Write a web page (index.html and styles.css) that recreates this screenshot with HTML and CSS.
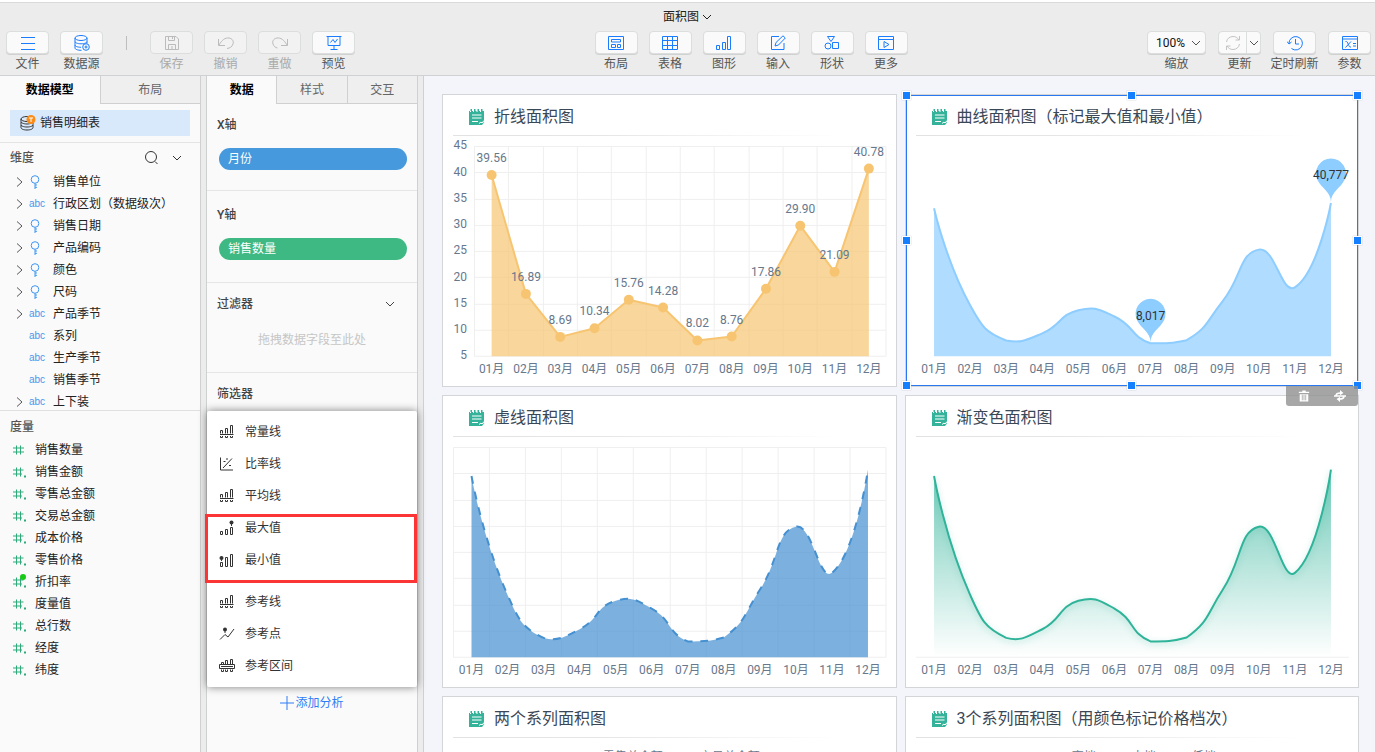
FILE: index.html
```html
<!DOCTYPE html>
<html lang="zh-CN">
<head>
<meta charset="utf-8">
<title>面积图</title>
<link rel="stylesheet" href="styles.css">
</head>
<body>
<svg class="sprite" aria-hidden="true">
  <symbol id="i-down" viewBox="0 0 10 10"><path d="M1 3l4 4 4-4"/></symbol>
  <symbol id="i-right" viewBox="0 0 10 10"><path d="M3 0.5l5 4.5-5 4.5"/></symbol>
  <symbol id="i-key" viewBox="0 0 12 14"><circle cx="6" cy="4.5" r="3.8"/><path d="M6 8.3V14M6 10h2M6 12.3h2"/></symbol>
  <symbol id="i-hash" viewBox="0 0 14 14"><path d="M3.5 2.500v9M7.500 2.500v9M0 5h11M0 9h11"/></symbol>
  <symbol id="i-hashdot" viewBox="0 0 14 14"><path d="M3.500 2.500v9M7.500 2.500v9M0 5h10.500M0 9h9"/><rect class="solid" x="11" y="10.500" width="2" height="2"/></symbol>
  <symbol id="i-note" viewBox="0 0 16 16"><path class="solid" d="M0 2h15v10l-1 1.500 1.500-.5-2.500 3H0z"/><path class="solid" d="M1.500 0h1.500v3h-1.500zM5 0h1.500v3H5zM8.500 0H10v3H8.500zM12 0h1.500v3H12z"/><path class="cut" d="M1 2.500h1M4 2.500h1M7.500 2.500h1M11 2.500h1M3 6h9.500M3 9h9.500M3 12.500h6M10 14.500l2-1.500 1 1 2-2.500"/></symbol>
  <symbol id="i-bars-line" viewBox="0 0 16 16"><path d="M1.500 9.500v-3h2v3M6.500 9.500v-5h2v5M11.500 9.500v-8h2v8M1 10.500h13.500M1.500 12v1.500h2V12M6.500 12v1.500h2V12M11.500 12v1.500h2V12"/></symbol>
</svg>

<header class="top">
  <div class="title-row"><button class="doc-title" type="button">面积图<svg class="chev"><use href="#i-down"/></svg></button></div>
  <div class="toolbar">
    <div class="tools">
      <button class="tool" type="button"><span class="face"><svg viewBox="0 0 16 16"><path d="M1 2.500h14M1 8.500h14M1 14.500h14"/></svg></span>文件</button>
      <button class="tool" type="button"><span class="face"><svg viewBox="0 0 16 16"><ellipse cx="7" cy="3" rx="6" ry="2.500"/><path d="M1 3v3.500c0 1.300 2.500 2.300 6 2.300s6-1 6-2.300V3M1 6.500V10c0 1.200 2.300 2.200 6 2.300M13 6.500v2M1 10v3c0 1.200 2.300 2.300 6.500 2.300"/><circle cx="12" cy="12" r="3.300"/><path d="M10.500 12h3M12 10.500v3"/></svg></span>数据源</button>
      <span class="sep"></span>
      <button class="tool off" type="button" disabled><span class="face"><svg viewBox="0 0 16 16"><path d="M1.500 1.500h10.500l2.500 2.500v10.500h-13zM4.500 1.500v4h6v-4M8.500 2v2M4.500 14.500v-5h7v5M8 11v3"/></svg></span>保存</button>
      <button class="tool off" type="button" disabled><span class="face"><svg viewBox="0 0 16 16"><path d="M0.500 4v6.500H7M1 10c3-5 6-7.500 10-7 3.500.5 5 3.500 4 6-1 3-3 4-6 4.500"/></svg></span>撤销</button>
      <button class="tool off" type="button" disabled><span class="face"><svg viewBox="0 0 16 16"><path d="M15.500 4v6.500H9M15 10c-3-5-6-7.500-10-7-3.500.5-5 3.500-4 6 .8 2.500 2.500 3.500 4.500 4"/></svg></span>重做</button>
      <button class="tool" type="button"><span class="face"><svg viewBox="0 0 16 16"><path d="M0.500 1.500h15M2 1.500v9h12v-9M4.500 7.500L7 4.500l2 3 2.500-3.500M8 10.500v4M4.500 14.500h7"/></svg></span>预览</button>
    </div>
    <div class="tools">
      <button class="tool" type="button"><span class="face"><svg viewBox="0 0 16 16"><path d="M.5 1.500h15v13H.5zM3.500 4.500h9v2.500h-9zM3.500 9.500h4v3h-4zM9.500 9.500h3v3h-3z"/></svg></span>布局</button>
      <button class="tool" type="button"><span class="face"><svg viewBox="0 0 16 16"><path d="M.5 1.500h15v13H.5zM.5 5.500h15M.5 10.500h15M5.500 1.500v13M10.500 1.500v13"/></svg></span>表格</button>
      <button class="tool" type="button"><span class="face"><svg viewBox="0 0 16 16"><path d="M.5 10.500h3v4h-3zM6.500 7.500h3v7h-3zM11.500 1.500h3v13h-3z"/></svg></span>图形</button>
      <button class="tool" type="button"><span class="face"><svg viewBox="0 0 16 16"><path d="M9 1.500H1.500v13H14V8M5 11l1-3.500L13 .8l2.300 2.200L8.500 10z"/></svg></span>输入</button>
      <button class="tool" type="button"><span class="face"><svg viewBox="0 0 16 16"><path d="M3.500 1.500h7L7 6.500zM8.500 7.500h6v6h-6z"/><circle cx="4" cy="11" r="3"/></svg></span>形状</button>
      <button class="tool" type="button"><span class="face"><svg viewBox="0 0 16 16"><path d="M.5 1.500h15v13H.5zM.5 4.500h15M6 6.500v6l5-3z"/></svg></span>更多</button>
    </div>
    <div class="tools tools-end">
      <div class="tool"><span class="face face-zoom"><select id="zoom" aria-labelledby="zoom-label"><option>100%</option></select><svg class="chev"><use href="#i-down"/></svg></span><label id="zoom-label" for="zoom">缩放</label></div>
      <button class="tool" type="button"><span class="face split"><span class="split-main"><svg viewBox="0 0 16 16"><path d="M1.500 7C2 3.500 4.800 1.500 8 1.500c2.500 0 4.500 1 6 3.500M14.500 1v4h-4M14.500 9c-.5 3.500-3.300 5.500-6.500 5.500-2.500 0-4.500-1-6-3.500M1.500 15v-4h4"/></svg></span><span class="split-arrow"><svg class="chev"><use href="#i-down"/></svg></span></span>更新</button>
      <button class="tool" type="button"><span class="face"><svg viewBox="0 0 16 16"><path d="M2 8.500A6.700 6.700 0 1 1 4.500 13.500M0 6.500L2 9l2.500-2M8.500 4v5h3.500"/></svg></span>定时刷新</button>
      <button class="tool" type="button"><span class="face"><svg viewBox="0 0 16 16"><path d="M.5 1.500h15v13H.5zM.5 4h15M3.500 6.500c3-1 2.500 6.500 5.500 5.500M9 6.500L3.500 12.500M11 8.500h3M11 11h3"/></svg></span>参数</button>
    </div>
  </div>
</header>

<div class="work">
  <aside class="panel model">
    <div class="tabs"><button class="tab on" type="button">数据模型</button><button class="tab" type="button">布局</button></div>
    <div class="source-wrap">
      <button class="source" type="button"><svg viewBox="0 0 16 16"><g class="ink"><ellipse cx="7" cy="4" rx="6" ry="2.500"/><path d="M1 4v2.500c0 1.300 2.500 2.500 6 2.500s6-1.200 6-2.500M1 7v2.500C1 11 3.500 12 7 12s6-1 6-2.500V7M1 10v2.500C1 14 3.500 15 7 15s6-1 6-2.500V10"/></g><circle class="badge" cx="11" cy="4.500" r="4.500"/><path class="badge-t" d="M9 3h4M11 3v4"/></svg>销售明细表</button>
    </div>
    <section class="dims">
      <div class="sec-head"><h2>维度</h2><span class="sec-tools"><svg class="search" viewBox="0 0 16 16"><circle cx="7" cy="7" r="5.500"/><path d="M11 11.500l2.500 2.500"/></svg><svg class="chev"><use href="#i-down"/></svg></span></div>
      <ul class="dim-list">
        <li><svg class="exp"><use href="#i-right"/></svg><svg class="key"><use href="#i-key"/></svg>销售单位</li>
        <li><svg class="exp"><use href="#i-right"/></svg><span class="abc">abc</span>行政区划（数据级次）</li>
        <li><svg class="exp"><use href="#i-right"/></svg><svg class="key"><use href="#i-key"/></svg>销售日期</li>
        <li><svg class="exp"><use href="#i-right"/></svg><svg class="key"><use href="#i-key"/></svg>产品编码</li>
        <li><svg class="exp"><use href="#i-right"/></svg><svg class="key"><use href="#i-key"/></svg>颜色</li>
        <li><svg class="exp"><use href="#i-right"/></svg><svg class="key"><use href="#i-key"/></svg>尺码</li>
        <li><svg class="exp"><use href="#i-right"/></svg><span class="abc">abc</span>产品季节</li>
        <li><span class="exp"></span><span class="abc">abc</span>系列</li>
        <li><span class="exp"></span><span class="abc">abc</span>生产季节</li>
        <li><span class="exp"></span><span class="abc">abc</span>销售季节</li>
        <li><svg class="exp"><use href="#i-right"/></svg><span class="abc">abc</span>上下装</li>
      </ul>
    </section>
    <section class="measures">
      <div class="sec-head"><h2>度量</h2></div>
      <ul class="mea-list">
        <li><svg class="hash"><use href="#i-hash"/></svg>销售数量</li>
        <li><svg class="hash"><use href="#i-hashdot"/></svg>销售金额</li>
        <li><svg class="hash"><use href="#i-hashdot"/></svg>零售总金额</li>
        <li><svg class="hash"><use href="#i-hashdot"/></svg>交易总金额</li>
        <li><svg class="hash"><use href="#i-hashdot"/></svg>成本价格</li>
        <li><svg class="hash"><use href="#i-hashdot"/></svg>零售价格</li>
        <li class="calc"><svg class="hash"><use href="#i-hashdot"/></svg>折扣率</li>
        <li><svg class="hash"><use href="#i-hashdot"/></svg>度量值</li>
        <li><svg class="hash"><use href="#i-hashdot"/></svg>总行数</li>
        <li><svg class="hash"><use href="#i-hashdot"/></svg>经度</li>
        <li><svg class="hash"><use href="#i-hashdot"/></svg>纬度</li>
      </ul>
    </section>
  </aside>

  <aside class="panel props">
    <div class="tabs"><button class="tab on" type="button">数据</button><button class="tab" type="button">样式</button><button class="tab" type="button">交互</button></div>
    <section class="slot"><h2>X轴</h2><div class="pill pill-dim">月份</div></section>
    <section class="slot"><h2>Y轴</h2><div class="pill pill-mea">销售数量</div></section>
    <section class="slot"><h2>过滤器<svg class="chev"><use href="#i-down"/></svg></h2><p class="hint">拖拽数据字段至此处</p></section>
    <section class="slot slot-filter"><h2>筛选器</h2></section>
    <div class="analysis">
      <button class="add" type="button"><svg viewBox="0 0 14 14"><path d="M7 0v14M0 7h14"/></svg>添加分析</button>
      <div class="menu" role="menu">
        <button type="button" role="menuitem"><svg><use href="#i-bars-line"/></svg>常量线</button>
        <button type="button" role="menuitem"><svg viewBox="0 0 16 16"><path d="M1.500 1.500v12.500H14M4 12L13 2.500M4.500 5.500h2M7 3h2M10 9.500h2"/></svg>比率线</button>
        <button type="button" role="menuitem"><svg><use href="#i-bars-line"/></svg>平均线</button>
        <button type="button" role="menuitem"><svg viewBox="0 0 16 16"><path d="M1.500 11.500h2v3h-2zM6.500 9.500h2v5h-2zM11.500 7.500h2v7h-2zM12.500 3v3"/><circle class="solid" cx="12.500" cy="2.500" r="2"/></svg>最大值</button>
        <button type="button" role="menuitem"><svg viewBox="0 0 16 16"><path d="M1.500 10.500h2v4h-2zM6.500 5.500h2v9h-2zM11.500 2.500h2v12h-2zM2.500 6v3"/><circle class="solid" cx="2.500" cy="6" r="2"/></svg>最小值</button>
        <span class="menu-gap"></span>
        <button type="button" role="menuitem"><svg><use href="#i-bars-line"/></svg>参考线</button>
        <button type="button" role="menuitem"><svg viewBox="0 0 16 16"><path d="M1 13.500l5-5 3 2.500 6-8M6 4v3"/><circle class="solid" cx="6" cy="3.500" r="2"/></svg>参考点</button>
        <button type="button" role="menuitem"><svg viewBox="0 0 16 16"><path d="M2.500 6V4.500h2V6M6.500 6V2.500h2V6M11.500 6V1.500h2V6M.5 6.500h15v4H.5zM2 8.500h12M2.500 11.500v2h2v-2M6.500 11.500v2h2v-2M11.500 11.500v2h2v-2"/></svg>参考区间</button>
        <span class="mark"></span>
      </div>
    </div>
  </aside>

  <main class="canvas">
    <article class="card"><h3><svg class="note"><use href="#i-note"/></svg>折线面积图</h3><svg class="chart" id="chart-line" viewBox="0 0 453 250"></svg></article>
    <article class="card selected"><h3><svg class="note"><use href="#i-note"/></svg>曲线面积图（标记最大值和最小值）</h3><svg class="chart" id="chart-curve" viewBox="0 0 453 250"></svg>
      <div class="frame"><i class="h tl"></i><i class="h tc"></i><i class="h tr"></i><i class="h ml"></i><i class="h mr"></i><i class="h bl"></i><i class="h bc"></i><i class="h br"></i></div>
      <div class="card-tools">
        <button type="button" aria-label="删除"><svg viewBox="0 0 14 14"><path class="solid" d="M1 2h4V.5h4V2h4v1.500H1zM2 5h10v8.500H2z"/><path class="gap-line" d="M5 5.500v6.500M7 5.500v6.500M9 5.500v6.500"/></svg></button>
        <button type="button" aria-label="切换"><svg viewBox="0 0 14 14"><path class="solid" d="M7 0l4 3.500L7 6zM7 14l-4-3.500L7 8z"/><path class="stroke" d="M2.500 6.500c0-2 1.500-3 5-3M0 7h14M11.500 7.500c0 2-1.500 3-5 3"/></svg></button>
      </div>
    </article>
    <article class="card"><h3><svg class="note"><use href="#i-note"/></svg>虚线面积图</h3><svg class="chart" id="chart-dash" viewBox="0 0 453 250"></svg></article>
    <article class="card"><h3><svg class="note"><use href="#i-note"/></svg>渐变色面积图</h3><svg class="chart" id="chart-fade" viewBox="0 0 453 250"></svg></article>
    <article class="card"><h3><svg class="note"><use href="#i-note"/></svg>两个系列面积图</h3><div class="legend legend-wide"><span class="s1">零售总金额</span><span class="s2">交易总金额</span></div></article>
    <article class="card"><h3><svg class="note"><use href="#i-note"/></svg>3个系列面积图（用颜色标记价格档次）</h3><div class="legend"><span class="s1">高档</span><span class="s2">中档</span><span class="s3">低档</span></div></article>
  </main>
</div>
<script src="charts.js"></script>
</body>
</html>
```
FILE: styles.css
```css
* { box-sizing: border-box; }
body {
  margin: 0;
  height: 100vh;
  display: flex;
  flex-direction: column;
  overflow: hidden;
  border-top: 2px solid #fff;
  background: #ebeceb;
  color: #333;
  font: 12px/20px Roboto, "Noto Sans CJK SC", sans-serif;
}
button, select { font: inherit; color: inherit; border: 0; padding: 0; background: none; }
h2, h3, ul, p { margin: 0; padding: 0; font-weight: normal; list-style: none; }
svg { fill: none; stroke: currentColor; display: block; flex: none; }
.solid { fill: currentColor; stroke: none; }
.sprite { position: absolute; width: 0; height: 0; }
.chev { width: 10px; height: 10px; }

/* header */
.top { border-top: 1px solid #d9dbdb; border-bottom: 1px solid #cfd1d2; height: 74px; flex: none; }
.title-row { display: flex; justify-content: center; height: 28px; padding-top: 4px; }
.doc-title { display: flex; align-items: center; gap: 3px; height: 20px; color: #222; }
.toolbar { display: flex; justify-content: space-between; padding: 0 4px 0 6px; }
.tools { display: flex; gap: 11px; }
.tools-end { gap: 12px; }
.tool { display: flex; flex-direction: column; align-items: center; width: 43px; color: #555; white-space: nowrap; }
.tool:has(.face-zoom) { width: 59px; }
.face {
  display: flex; align-items: center; justify-content: center;
  align-self: stretch; height: 23px;
  border: 1px solid #dcdddd; border-radius: 4px; background: #fafafa;
  box-shadow: 0 1px 0 #d0d1d1; color: #1a7cff;
}
.face svg { width: 16px; height: 16px; }
.tool.off { color: #aaa; }
.tool.off .face { background: #f1f2f1; color: #bbb; box-shadow: none; }
.sep { width: 25px; height: 23px; display: flex; justify-content: center; align-items: center; }
.sep::before { content: ""; width: 1px; height: 14px; background: #bdbdbd; }
.face-zoom { position: relative; color: #111; }
.face-zoom select { appearance: none; width: 100%; padding-left: 8px; height: 21px; outline: 0; }
.face-zoom .chev, .split .chev { width: 10px; height: 10px; color: #555; }
.face-zoom .chev { position: absolute; right: 4px; pointer-events: none; }
.split-main, .split-arrow { display: flex; align-items: center; justify-content: center; height: 21px; }
.split-main { flex: 1; color: #c4c4c4; }
.split-arrow { width: 14px; border-left: 1px solid #dcdddd; }

/* panels */
.work { flex: 1; min-height: 0; display: flex; gap: 5px; }
.panel { background: #fafafa; flex: none; display: flex; flex-direction: column; }
.model { width: 201px; border-right: 1px solid #cfd0d0; }
.props { width: 212px; border: solid #cfd0d0; border-width: 0 1px; }
.tabs { display: flex; height: 28px; flex: none; }
.tab { flex: 1; background: #efefef; border: solid #d0d0d0; border-width: 0 0 1px 1px; color: #666; }
.tab.on { background: none; border-color: transparent; font-weight: bold; color: #000; border-left: 0; }
.source-wrap { padding: 6px 10px; border-bottom: 1px solid #e4e4e4; }
.source { display: flex; align-items: center; gap: 4px; width: 100%; height: 26px; padding-left: 10px; background: #d8e9fb; color: #222; }
.source svg { width: 16px; height: 16px; }
.ink { stroke: #333; }
.badge { fill: #fb8c16; stroke: none; }
.badge-t { stroke: #fff; }
.sec-head { display: flex; justify-content: space-between; align-items: center; height: 28px; padding: 2px 18px 0 10px; }
.sec-head h2, .slot h2 { color: #555; font-size: 12px; font-weight: 500; }
.sec-tools { display: flex; align-items: center; gap: 12px; color: #333; }
.search { width: 16px; height: 16px; }
.dims { border-bottom: 1px solid #e0e0e0; flex: none; }
.dim-list { height: 239px; overflow: hidden; }
li { display: flex; align-items: center; height: 22px; color: #222; white-space: nowrap; }
.dim-list li { padding-left: 14px; }
.exp { width: 10px; height: 10px; margin-right: 5px; color: #555; }
.key { width: 12px; height: 14px; margin-right: 12px; color: #3f96f3; }
.abc { width: 24px; color: #4a96ee; font: 10px/14px "Liberation Sans", sans-serif; }
.measures .sec-head { padding-top: 3px; }
.mea-list li { padding-left: 13px; gap: 8px; }
.hash { width: 14px; height: 14px; color: #2cab78; }
.calc { position: relative; }
.calc::before { content: ""; position: absolute; left: 20px; top: 3px; width: 6px; height: 6px; border-radius: 50%; background: #19c917; }

.slot { padding: 11px 10px 20px; border-bottom: 1px solid #e6e6e6; }
.slot + .slot { padding-bottom: 22px; }
.slot h2 { display: flex; justify-content: space-between; align-items: center; padding-right: 12px; color: #444; }
.pill { height: 22px; margin: 13px 0 0 2px; padding-left: 9px; border-radius: 11px; color: #fff; line-height: 22px; }
.pill-dim { background: #4699dc; }
.pill-mea { background: #3eb983; }
.slot:has(.pill-mea) { padding-top: 14px; }
.hint { margin-top: 16px; text-align: center; color: #c6c6c6; }
.slot.slot-filter { flex: 0 0 310px; border: 0; }
.analysis { position: relative; display: flex; justify-content: center; padding-top: 10px; }
.add { display: flex; align-items: center; gap: 1px; height: 20px; color: #2f7df6; }
.add svg { width: 14px; height: 14px; }
.menu {
  position: absolute; left: 0; right: 0; bottom: calc(100% - 4px);
  display: flex; flex-direction: column; padding: 5px 0;
  background: #fff; border-radius: 2px; box-shadow: 0 0 8px rgba(0, 0, 0, .5);
}
.menu button { display: flex; align-items: center; gap: 10px; height: 32px; padding-left: 12px; color: #333; }
.menu svg { width: 16px; height: 16px; }
.menu-gap { height: 10px; }
.mark { position: absolute; left: -2px; right: 0; top: 103px; height: 69px; border: 3px solid #fb3535; }

/* canvas */
.canvas {
  flex: 1; min-width: 0; overflow: hidden;
  display: grid; grid-template-columns: 1fr 1fr; grid-auto-rows: 293px; gap: 8px;
  align-content: start;
  padding: 18px 16px 0 18px;
  border-left: 1px solid #cfd0d0; background: #f4f5fa;
}
.card { position: relative; min-width: 0; background: #fff; border: 1px solid #d3d5d8; }
.card h3 {
  display: flex; align-items: center; gap: 9px; height: 41px; padding: 2px 0 0 26px;
  font-size: 16px; line-height: 24px; color: #3a4756;
  background: linear-gradient(90deg, #e2e2e2 10px, #e6e6e6 35%, #fff 90%) 10px 100% / calc(100% - 20px) 1px no-repeat;
}
.note { width: 16px; height: 16px; color: #35b39a; }
.cut { stroke: #fff; }
.chart { width: 100%; height: auto; overflow: visible; }
.chart text { fill: #67788c; stroke: none; font-size: 12px; text-anchor: middle; }
.chart .tick { text-anchor: end; }
.chart .pin-text { fill: #333; }
.grid-line { stroke: #efefef; }
.selected { z-index: 1; }
.frame { position: absolute; inset: 0; border: 1px solid #2a78f0; pointer-events: none; }
.h { position: absolute; width: 9px; height: 9px; margin: -5px; background: #1480ff; border: 1px solid #fff; box-shadow: 0 0 1px #aaa; }
.tl, .tc, .tr { top: 0; }
.ml, .mr { top: 50%; }
.bl, .bc, .br { top: 100%; }
.tl, .ml, .bl { left: 0; }
.tc, .bc { left: 50%; }
.tr, .mr, .br { left: 100%; margin-left: -4px; }
.bl, .bc, .br { margin-top: -4px; }
.card-tools { position: absolute; right: 0; top: 100%; display: flex; width: 72px; height: 20px; background: rgba(145, 145, 145, .8); border-radius: 0 0 3px 3px; }
.card-tools button { flex: 1; display: flex; align-items: center; justify-content: center; color: #fff; }
.card-tools svg { width: 12px; height: 12px; }
.card-tools .gap-line { stroke: #aaa; }
.card-tools .stroke { stroke-width: 2; }
.legend { display: flex; justify-content: center; gap: 8px; padding-top: 9px; color: #67788c; }
.legend span { display: flex; align-items: center; width: 52px; }
.legend-wide { gap: 9px; }
.legend-wide span { width: 88px; }
.legend span::before { content: ""; width: 10px; height: 10px; margin: 0 12px 0 4px; border-radius: 50%; background: currentColor; }
.s1::before { color: #8ecbff; }
.s2::before { color: #35b39a; }
.s3::before { color: #f7c571; }
```
FILE: charts.js
```js
const sales = [39.56, 16.89, 8.69, 10.34, 15.76, 14.28, 8.02, 8.76, 17.86, 29.9, 21.09, 40.78];
const months = sales.map((_, i) => String(i + 1).padStart(2, "0") + "月");
const NS = "http://www.w3.org/2000/svg";

function add(parent, tag, attrs, text) {
  const el = document.createElementNS(NS, tag);
  for (const k in attrs) el.setAttribute(k, attrs[k]);
  if (text) el.textContent = text;
  parent.appendChild(el);
  return el;
}

// Bezier smoothing with control points kept inside the data's bounding box
function curve(pts, smooth) {
  const xs = pts.map(p => p[0]), ys = pts.map(p => p[1]);
  const lo = [Math.min(...xs), Math.min(...ys)], hi = [Math.max(...xs), Math.max(...ys)];
  const clamp = c => c.map((v, k) => Math.min(hi[k], Math.max(lo[k], v)));
  let d = "M" + pts[0], c0 = pts[0];
  for (let i = 1; i < pts.length; i++) {
    const p = pts[i], a = pts[i - 1], b = pts[i + 1];
    if (!smooth) { d += "L" + p; continue; }
    let c1 = p, next = p;
    if (b) {
      const v = [b[0] - a[0], b[1] - a[1]];
      const before = Math.hypot(p[0] - a[0], p[1] - a[1]);
      const after = Math.hypot(b[0] - p[0], b[1] - p[1]);
      const r = after / (after + before);
      c1 = [p[0] - v[0] * smooth * (1 - r), p[1] - v[1] * smooth * (1 - r)];
      next = [p[0] + v[0] * smooth * r, p[1] + v[1] * smooth * r];
    }
    d += "C" + clamp(c0) + " " + clamp(c1) + " " + p;
    c0 = next;
  }
  return d;
}

function pin(svg, x, y, color, label) {
  const r = 15, dy = r * r / 35, cy = y - 35 + dy, a = Math.asin(dy / r);
  const dx = Math.cos(a) * r, tx = Math.sin(a) * 9, ty = Math.cos(a) * 9, base = cy + dy;
  add(svg, "path", { fill: color, stroke: "none",
    d: `M${x - dx} ${base}A${r} ${r} 0 1 1 ${x + dx} ${base}C${x + dx - tx} ${base + ty} ${x} ${y - 10.5} ${x} ${y}C${x} ${y - 10.5} ${x - dx + tx} ${base + ty} ${x - dx} ${base}Z` });
  add(svg, "text", { x, y: cy + 6, class: "pin-text" }, label);
}

function draw(id, o) {
  const svg = document.getElementById(id), bottom = 220.5, top = o.top || 10.5;
  const band = (o.right - o.left) / 12;
  const x = i => o.left + band * (i + 0.5);
  const y = v => bottom - (v - 5) / 40 * (bottom - top);
  if (o.grid) {
    for (let i = 0; i <= 12; i++) {
      const gx = Math.round(o.left + band * i - 0.5) + 0.5;
      add(svg, "path", { class: "grid-line", d: `M${gx} ${top}V${bottom}` });
    }
    for (let i = 0; i < 9; i++) {
      const gy = Math.round(top + 26.25 * i - 0.5) + 0.5;
      add(svg, "path", { class: "grid-line", d: `M${o.left} ${gy}H${o.right}` });
    }
  }
  if (o.axis) add(svg, "path", { class: "grid-line", d: `M${o.left} ${bottom}H${o.right}` });
  const pts = sales.map((v, i) => [x(i), y(v)]);
  const line = curve(pts, o.smooth);
  let fill = o.color;
  if (o.fade) {
    const g = add(add(svg, "defs", {}), "linearGradient", { id: id + "-fill", x1: 0, y1: 0, x2: 0, y2: 1 });
    add(g, "stop", { offset: 0, "stop-color": o.color });
    add(g, "stop", { offset: 1, "stop-color": o.color, "stop-opacity": 0 });
    fill = `url(#${id}-fill)`;
  }
  add(svg, "path", { d: `${line}L${x(11)} ${bottom}L${x(0)} ${bottom}Z`, fill, stroke: "none", opacity: 0.7 });
  const stroke = add(svg, "path", { d: line, stroke: o.color, "stroke-width": 2, "stroke-linejoin": "bevel" });
  if (o.dash) stroke.setAttribute("stroke-dasharray", "8 8");
  if (o.fade) stroke.style.filter = "drop-shadow(0 2px 3px rgba(47,179,153,.35))";
  if (o.values) {
    pts.forEach((p, i) => {
      add(svg, "circle", { cx: p[0], cy: p[1], r: 5, fill: o.color, stroke: "none" });
      add(svg, "text", { x: p[0], y: p[1] - 13 }, sales[i].toFixed(2));
    });
    for (let v = 5; v <= 45; v += 5) add(svg, "text", { class: "tick", x: 24, y: y(v) + 3 }, String(v));
  }
  if (o.pins) {
    pin(svg, x(6), y(8.02) - 1, o.color, "8,017");
    pin(svg, x(11), y(40.78) - 1, o.color, "40,777");
  }
  months.forEach((m, i) => add(svg, "text", { x: x(i), y: 237 }, m));
}

draw("chart-line", { left: 31.5, right: 443.5, color: "#f7c571", grid: true, values: true });
draw("chart-curve", { left: 10, right: 443.5, top: 49, color: "#8ecdff", smooth: 0.5, pins: true });
draw("chart-dash", { left: 10.5, right: 443.5, color: "#4590d1", smooth: 0.5, grid: true, dash: true });
draw("chart-fade", { left: 10, right: 443.5, color: "#2fb399", smooth: 0.5, axis: true, fade: true });
```
